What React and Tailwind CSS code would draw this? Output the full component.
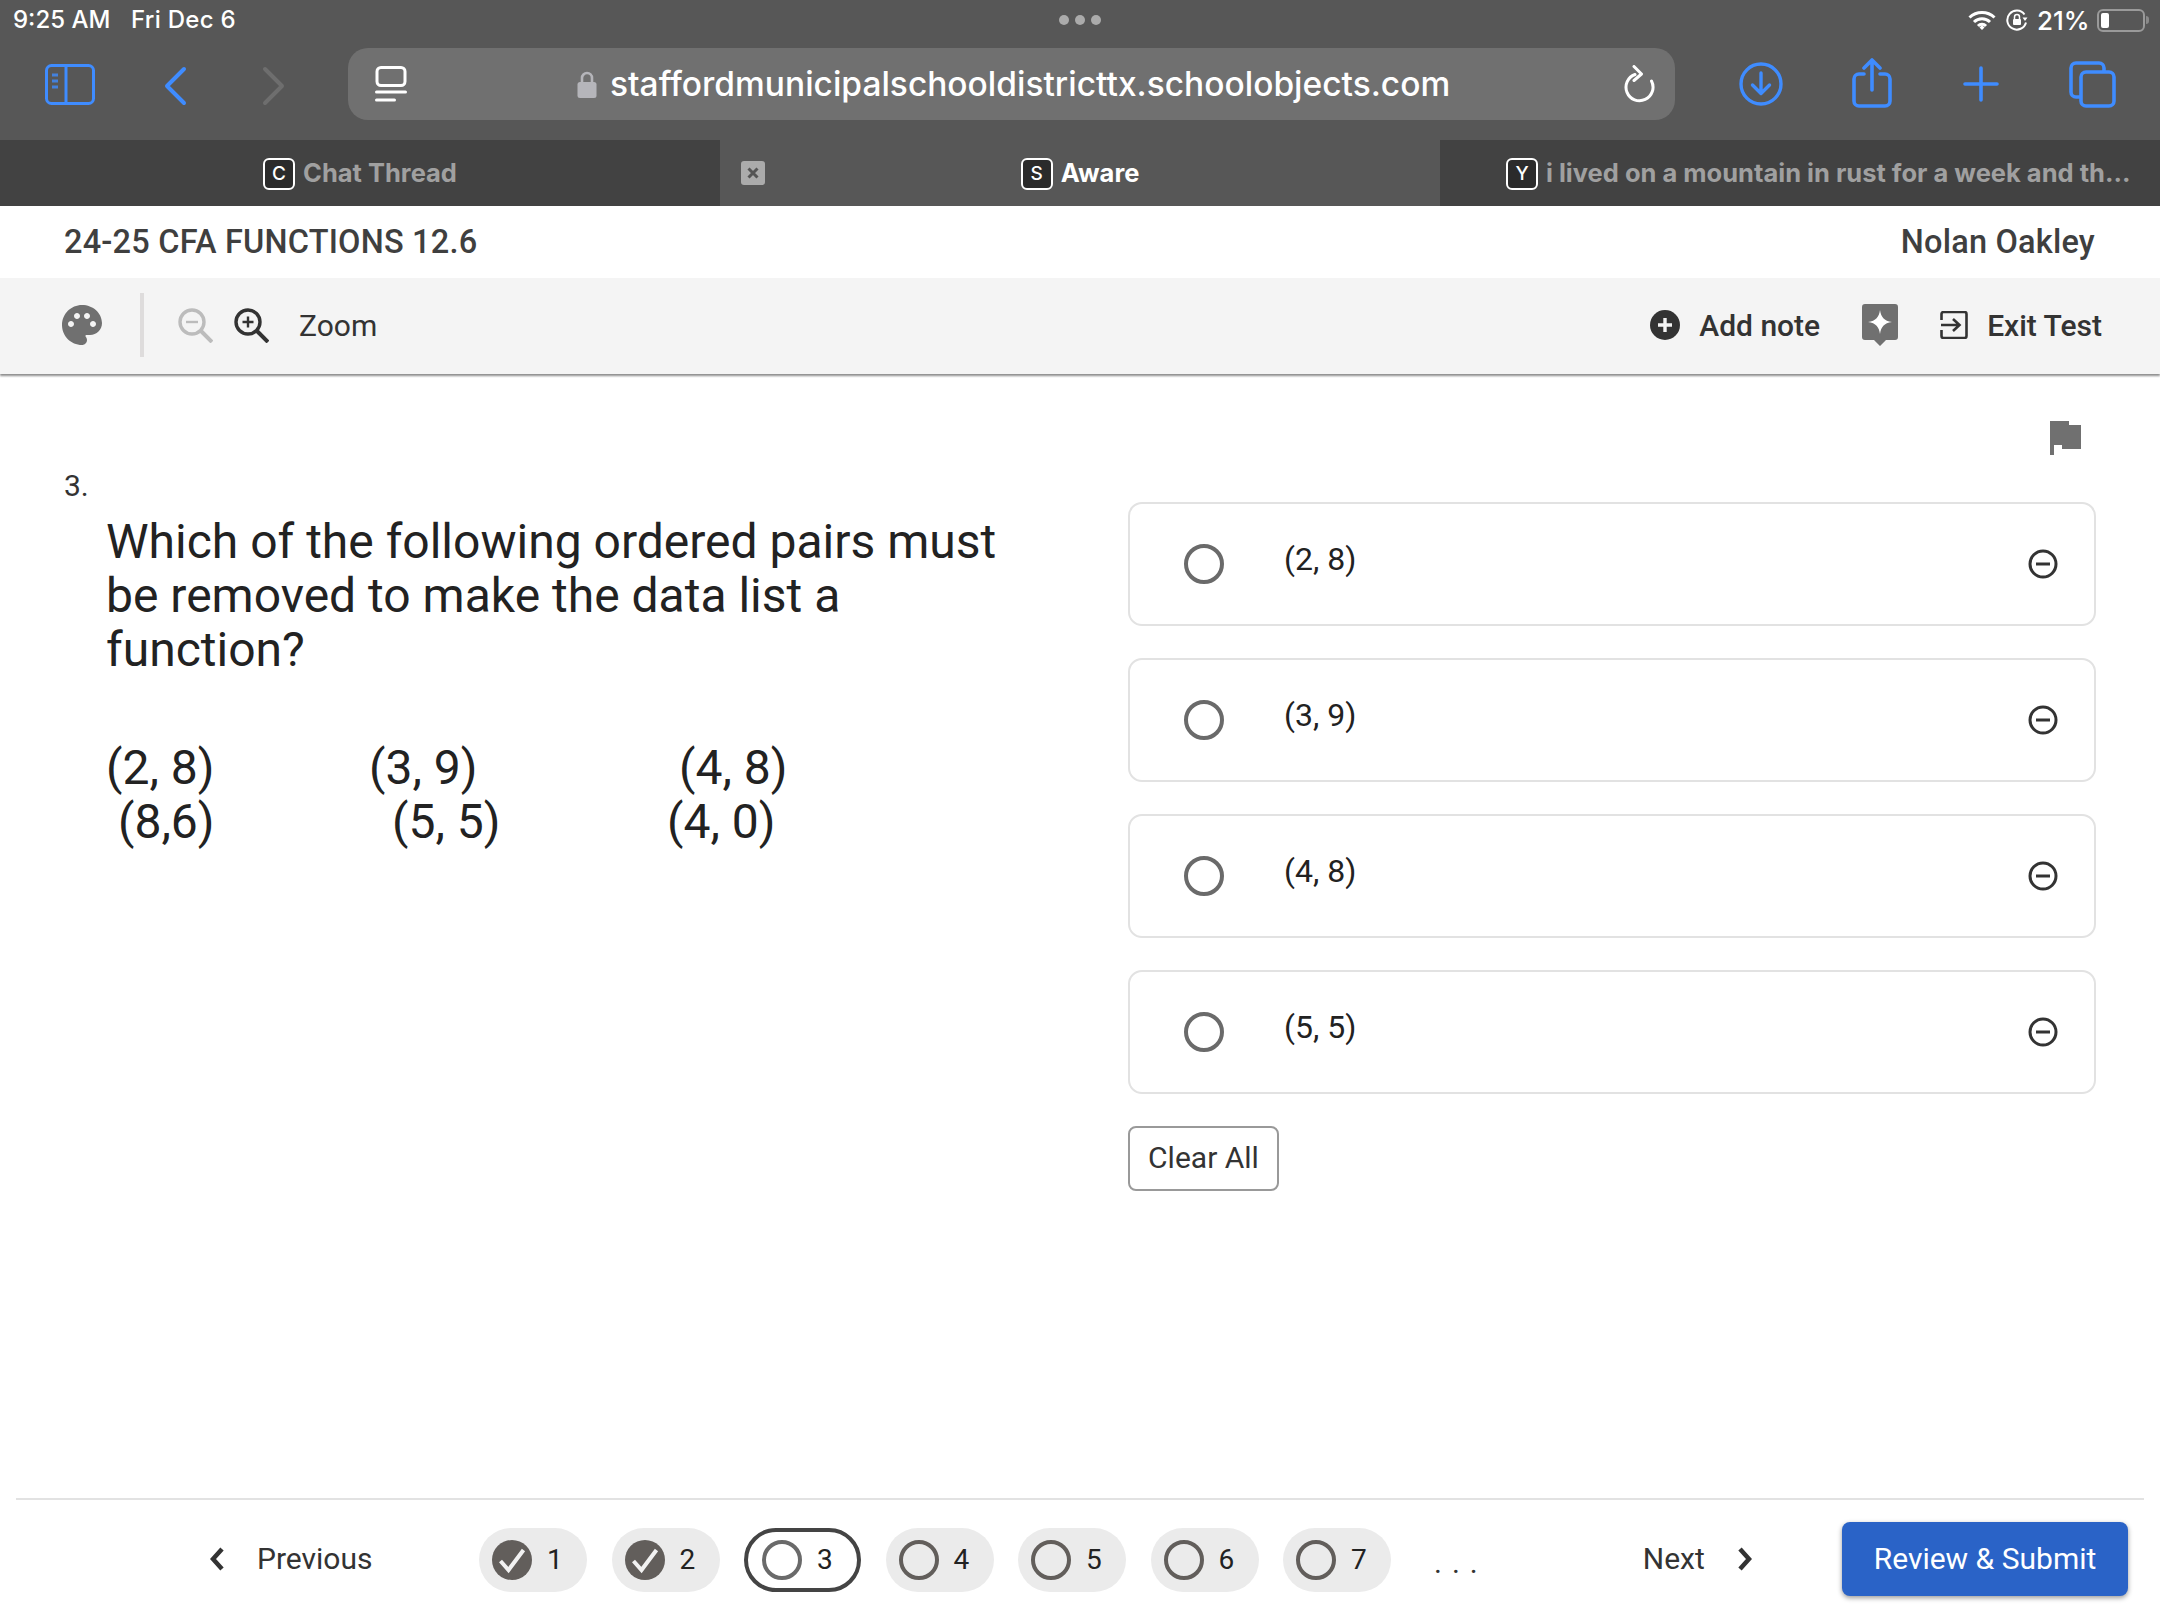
const options = ["(2, 8)", "(3, 9)", "(4, 8)", "(5, 5)"];

function SidebarIcon() {
  return (
    <svg width="50" height="41" viewBox="0 0 50 41" fill="none" stroke="#3f8cff">
      <rect x="1.5" y="1.5" width="47" height="38" rx="5" strokeWidth="3" />
      <path d="M21 2v37" strokeWidth="3" />
      <path d="M7 11h6M7 17h6M7 23h6" strokeWidth="3" opacity=".8" />
    </svg>
  );
}

function Chevron({ dir, color, width = 4 }) {
  return (
    <svg width="24" height="40" viewBox="0 0 24 40" fill="none" stroke={color} strokeWidth={width} strokeLinecap="round" strokeLinejoin="round">
      <path d={dir === "left" ? "M21 3L4 20l17 17" : "M3 3l17 17L3 37"} />
    </svg>
  );
}

function ReaderIcon() {
  return (
    <svg className="shrink-0" width="32" height="36" viewBox="0 0 32 36" fill="none" stroke="#fff" strokeWidth="3" strokeLinecap="round">
      <rect x="2" y="1.5" width="28" height="18" rx="4" />
      <path d="M1.5 26h29M1.5 34h18" />
    </svg>
  );
}

function LockIcon() {
  return (
    <svg className="shrink-0" width="20" height="27" viewBox="0 0 20 27">
      <path d="M5 12V7a5 5 0 0 1 10 0v5" fill="none" stroke="#b5b5ba" strokeWidth="2.6" />
      <rect x="0.5" y="11" width="19" height="16" rx="2.5" fill="#b5b5ba" />
    </svg>
  );
}

function ReloadIcon() {
  return (
    <svg className="shrink-0" width="32" height="38" viewBox="0 0 32 38" fill="none" stroke="#fff" strokeWidth="3" strokeLinecap="round" strokeLinejoin="round">
      <path d="M12 9.5A13.5 13.5 0 1 0 28.5 16" />
      <path d="M11 1.5l7.5 7.5-7.5 6.5" />
    </svg>
  );
}

function DownloadIcon() {
  return (
    <svg width="44" height="44" viewBox="0 0 44 44" fill="none" stroke="#3f8cff" strokeWidth="3.4" strokeLinecap="round" strokeLinejoin="round">
      <circle cx="22" cy="22" r="20" />
      <path d="M22 11v20M13.5 23l8.5 8.5 8.5-8.5" />
    </svg>
  );
}

function ShareIcon() {
  return (
    <svg width="40" height="50" viewBox="0 0 40 50" fill="none" stroke="#3f8cff" strokeWidth="3.6" strokeLinecap="round" strokeLinejoin="round">
      <path d="M12 16H7a5 5 0 0 0-5 5v22a5 5 0 0 0 5 5h26a5 5 0 0 0 5-5V21a5 5 0 0 0-5-5h-5" />
      <path d="M20 32V3M12 10l8-8 8 8" />
    </svg>
  );
}

function PlusIcon() {
  return (
    <svg width="36" height="36" viewBox="0 0 36 36" fill="none" stroke="#3f8cff" strokeWidth="3.6" strokeLinecap="round">
      <path d="M18 2v32M2 18h32" />
    </svg>
  );
}

function TabsIcon() {
  return (
    <svg width="47" height="47" viewBox="0 0 47 47" fill="none" stroke="#3f8cff" strokeWidth="3.6" strokeLinejoin="round">
      <path d="M11 36H7a5 5 0 0 1-5-5V7a5 5 0 0 1 5-5h23a5 5 0 0 1 5 5v4" />
      <rect x="12" y="11" width="33" height="34" rx="5" />
    </svg>
  );
}

function WifiIcon() {
  return (
    <svg width="28" height="20" viewBox="0 0 28 20" fill="none" stroke="#fff" strokeWidth="3">
      <path d="M1.5 7.5a18 18 0 0 1 25 0M6 12a11.5 11.5 0 0 1 16 0M10 16a5.5 5.5 0 0 1 8 0" />
      <path d="M11.5 17.5L14 15l2.5 2.5L14 20z" fill="#fff" stroke="none" />
    </svg>
  );
}

function RotationLock() {
  return (
    <svg width="22" height="22" viewBox="0 0 22 22" fill="none" stroke="#fff" strokeWidth="2">
      <path d="M20 13.5A9.5 9.5 0 1 1 18.5 5.5" />
      <path d="M16.5 8.5h5l-2.5 3.5z" fill="#fff" stroke="none" />
      <rect x="7" y="10" width="8" height="6" rx="1" fill="#fff" stroke="none" />
      <path d="M8.5 10V8a2.5 2.5 0 0 1 5 0v2" strokeWidth="1.5" />
    </svg>
  );
}

function FavBadge({ letter }) {
  return (
    <span className="flex h-[32px] w-[32px] shrink-0 items-center justify-center rounded-[6px] border-2 border-white bg-[#2b2b2b] font-['Inter',sans-serif] text-[19px] leading-none font-medium text-white">
      {letter}
    </span>
  );
}

function CheckCircle() {
  return (
    <svg width="40" height="40" viewBox="0 0 40 40" className="shrink-0">
      <circle cx="20" cy="20" r="20" fill="#625e5b" />
      <path d="M8.5 21l8 9 15-20" fill="none" stroke="#f2f2f2" strokeWidth="4" />
    </svg>
  );
}

function Pill({ n, done, active }) {
  if (active) {
    return (
      <div className="flex h-[64px] w-[117px] items-center rounded-[32px] border-[4px] border-[#444] bg-white pl-[14px]">
        <span className="h-[40px] w-[40px] shrink-0 rounded-full border-[4px] border-[#6a6a6a]" />
        <span className="ml-[15px] text-[28px] leading-none text-[#222]">{n}</span>
      </div>
    );
  }
  return (
    <div className="flex h-[64px] w-[108px] items-center rounded-[32px] bg-[#ebebeb] pl-[13px]">
      {done ? (
        <CheckCircle />
      ) : (
        <span className="h-[40px] w-[40px] shrink-0 rounded-full border-[4px] border-[#625e5b]" />
      )}
      <span className="ml-[15px] text-[28px] leading-none text-[#222]">{n}</span>
    </div>
  );
}

export default function App() {
  return (
    <div className="flex h-[1620px] w-[2160px] flex-col overflow-hidden bg-white font-['Roboto',sans-serif]">
      {/* safari chrome */}
      <div className="h-[140px] shrink-0 bg-[#575757]">
        <div className="flex h-[40px] items-center pl-[13px] font-['Inter',sans-serif] text-[24px] font-medium text-white">
          <span className="w-[118px]">9:25 AM</span>
          <span className="tracking-[0.3px]">Fri Dec 6</span>
          <div className="ml-[823px] flex gap-[6px]">
            <span className="h-[10px] w-[10px] rounded-full bg-[#ababab]" />
            <span className="h-[10px] w-[10px] rounded-full bg-[#ababab]" />
            <span className="h-[10px] w-[10px] rounded-full bg-[#ababab]" />
          </div>
          <div className="ml-[867px]"><WifiIcon /></div>
          <div className="ml-[10px]"><RotationLock /></div>
          <span className="ml-[9px] w-[50px] text-[26px] whitespace-nowrap">21%</span>
          <div className="ml-[10px] flex items-center">
            <div className="flex h-[23px] w-[48px] items-center rounded-[6px] border-2 border-[#9a9a9a] pl-[2px]">
              <span className="h-[15px] w-[8px] rounded-[2px] bg-white" />
            </div>
            <span className="ml-[1px] h-[8px] w-[3px] rounded-r-full bg-[#8a8a8a]" />
          </div>
        </div>
        <div className="flex h-[100px] items-start pt-[8px]">
          <div className="mt-[16px] ml-[45px]"><SidebarIcon /></div>
          <div className="mt-[18px] ml-[68px]"><Chevron dir="left" color="#3f8cff" /></div>
          <div className="mt-[18px] ml-[75px]"><Chevron dir="right" color="#6e6e6e" /></div>
          <div className="ml-[62px] flex h-[72px] w-[1327px] items-center rounded-[20px] bg-[#707070] pr-[20px] pl-[27px]">
            <ReaderIcon />
            <div className="ml-[170px]"><LockIcon /></div>
            <span className="mt-[2px] ml-[13px] font-['Inter',sans-serif] text-[33.5px] leading-none font-medium whitespace-nowrap text-white">
              staffordmunicipalschooldistricttx.schoolobjects.com
            </span>
            <div className="ml-auto"><ReloadIcon /></div>
          </div>
          <div className="mt-[14px] ml-[64px]"><DownloadIcon /></div>
          <div className="mt-[10px] ml-[69px]"><ShareIcon /></div>
          <div className="mt-[18px] ml-[71px]"><PlusIcon /></div>
          <div className="mt-[13px] ml-[70px]"><TabsIcon /></div>
        </div>
      </div>
      <div className="flex h-[66px] shrink-0 font-['Inter',sans-serif] text-[25.5px] font-bold">
        <div className="flex w-[720px] items-center justify-center gap-[8px] bg-[#424242] pt-[1px] text-[#a0a0a0]">
          <FavBadge letter="C" />
          <span>Chat Thread</span>
        </div>
        <div className="relative flex w-[720px] items-center justify-center gap-[8px] bg-[#575757] pt-[1px] text-white">
          <span className="absolute top-[21px] left-[21px] flex h-[24px] w-[24px] items-center justify-center rounded-[3px] bg-[#ababab]">
            <svg width="12" height="12" viewBox="0 0 12 12" stroke="#555" strokeWidth="3">
              <path d="M1.5 1.5l9 9M10.5 1.5l-9 9" />
            </svg>
          </span>
          <FavBadge letter="S" />
          <span>Aware</span>
        </div>
        <div className="flex w-[720px] items-center gap-[8px] bg-[#424242] pt-[1px] pl-[66px] text-[#a0a0a0]">
          <FavBadge letter="Y" />
          <span className="whitespace-nowrap">i lived on a mountain in rust for a week and th...</span>
        </div>
      </div>

      {/* test header */}
      <div className="flex h-[72px] shrink-0 items-center justify-between pr-[65px] pl-[64px] text-[32.5px] font-medium tracking-[0.2px] text-[#3f3f3f]">
        <span>24-25 CFA FUNCTIONS 12.6</span>
        <span>Nolan Oakley</span>
      </div>
      <div className="flex h-[96px] shrink-0 items-center bg-[#f4f4f4] pr-[58px] pb-[2px] pl-[62px] text-[30px] text-[#333] shadow-[0_2px_2px_rgba(0,0,0,0.45)]">
        <svg width="40" height="40" viewBox="2 2 20 20" fill="#707070">
          <path d="M12 2C6.49 2 2 6.49 2 12s4.49 10 10 10c1.38 0 2.5-1.12 2.5-2.5 0-.61-.23-1.2-.64-1.67-.08-.1-.13-.21-.13-.33 0-.28.22-.5.5-.5H16c3.31 0 6-2.69 6-6 0-4.96-4.49-9-10-9zm-5.5 11c-.83 0-1.5-.67-1.5-1.5S5.67 10 6.5 10 8 10.67 8 11.5 7.33 13 6.5 13zm3-4C8.67 9 8 8.33 8 7.5S8.67 6 9.5 6s1.5.67 1.5 1.5S10.33 9 9.5 9zm5 0c-.83 0-1.5-.67-1.5-1.5S13.67 6 14.5 6s1.5.67 1.5 1.5S15.33 9 14.5 9zm3 4c-.83 0-1.5-.67-1.5-1.5s.67-1.5 1.5-1.5 1.5.67 1.5 1.5-.67 1.5-1.5 1.5z" />
        </svg>
        <span className="ml-[38px] h-[64px] w-[4px] bg-[#dedcdc]" />
        <svg className="ml-[34px]" width="35" height="35" viewBox="0 0 35 35" fill="none" stroke="#bcbcbc" strokeWidth="3.4">
          <circle cx="14" cy="14" r="12" />
          <path d="M8 14h12" strokeWidth="2.4" />
          <path d="M23 23l11 11" strokeWidth="4" />
        </svg>
        <svg className="ml-[21px]" width="35" height="35" viewBox="0 0 35 35" fill="none" stroke="#333" strokeWidth="3.4">
          <circle cx="14" cy="14" r="12" />
          <path d="M8.5 14h11M14 8.5v11" strokeWidth="2.4" />
          <path d="M23 23l11 11" strokeWidth="4" />
        </svg>
        <span className="ml-[30px]">Zoom</span>
        <svg className="ml-auto" width="30" height="30" viewBox="0 0 30 30">
          <circle cx="15" cy="15" r="15" fill="#333" />
          <path d="M15 8v14M8 15h14" stroke="#f4f4f4" strokeWidth="3.4" />
        </svg>
        <span className="ml-[19px] font-medium">Add note</span>
        <svg className="ml-[42px]" width="36" height="42" viewBox="0 0 36 42">
          <path d="M3 0h30a3 3 0 0 1 3 3v30a3 3 0 0 1-3 3h-9l-6 6-6-6H3a3 3 0 0 1-3-3V3a3 3 0 0 1 3-3z" fill="#707070" />
          <path d="M18 6c1 7 4 11 12 12-8 1-11 5-12 12-1-7-4-11-12-12 8-1 11-5 12-12z" fill="#fff" />
        </svg>
        <svg className="ml-[42px]" width="28" height="28" viewBox="0 0 28 28" fill="none" stroke="#333" strokeWidth="2.6">
          <path d="M1.5 9V3a2 2 0 0 1 2-2h21a2 2 0 0 1 2 2v22a2 2 0 0 1-2 2h-21a2 2 0 0 1-2-2v-6" />
          <path d="M1 14h18M13 8l6.5 6-6.5 6" />
        </svg>
        <span className="ml-[19px] font-medium">Exit Test</span>
      </div>

      {/* question */}
      <div className="flex min-h-0 flex-1 pr-[64px] pl-[64px]">
        <div className="w-[1064px] pt-[92px]">
          <div className="text-[30px] leading-[40px] text-[#333]">3.</div>
          <div className="mt-[9px] pl-[42px] text-[48px] leading-[54px] text-[#222]">
            <p className="w-[900px]">Which of the following ordered pairs must be removed to make the data list a function?</p>
            <div className="mt-[64px] flex">
              <span className="w-[263px]">(2, 8)</span>
              <span className="w-[310px]">(3, 9)</span>
              <span>(4, 8)</span>
            </div>
            <div className="flex">
              <span className="ml-[12px] w-[274px]">(8,6)</span>
              <span className="w-[275px]">(5, 5)</span>
              <span>(4, 0)</span>
            </div>
          </div>
        </div>
        <div className="flex w-[968px] flex-col">
          <div className="flex h-[128px] shrink-0 justify-end pt-[47px] pr-[15px]">
            <svg width="31" height="34" viewBox="0 0 31 34" fill="#707070">
              <path d="M0 0h19v4h12v24H12v-4H4v10H0z" />
            </svg>
          </div>
          <div className="flex flex-col gap-[32px]">
            {options.map((o) => (
              <div key={o} className="flex h-[124px] items-center rounded-[14px] border-2 border-[#e2e2e2] pr-[36px] pl-[54px]">
                <span className="h-[40px] w-[40px] shrink-0 rounded-full border-[4px] border-[#6a6a6a]" />
                <span className="mb-[11px] ml-[60px] text-[32px] text-[#222]">{o}</span>
                <svg className="ml-auto" width="30" height="30" viewBox="0 0 30 30" fill="none" stroke="#333" strokeWidth="3">
                  <circle cx="15" cy="15" r="13" />
                  <path d="M8 15h14" />
                </svg>
              </div>
            ))}
          </div>
          <button className="mt-[32px] h-[65px] w-[151px] rounded-[8px] border-2 border-[#999] bg-white pb-[2px] text-[30px] text-[#333]">
            Clear All
          </button>
        </div>
      </div>

      {/* bottom nav */}
      <div className="mx-[16px] flex h-[122px] shrink-0 items-center border-t-2 border-[#e2e2e2] pr-[16px] pb-[3px] text-[30px] text-[#333]">
        <svg className="ml-[194px]" width="14" height="24" viewBox="0 0 14 24" fill="none" stroke="#333" strokeWidth="4.5">
          <path d="M12 2L3 12l9 10" />
        </svg>
        <span className="ml-[33px] w-[222px]">Previous</span>
        <div className="mt-[2px] flex items-center gap-[24.5px]">
          <Pill n={1} done />
          <Pill n={2} done />
          <Pill n={3} active />
          <Pill n={4} />
          <Pill n={5} />
          <Pill n={6} />
          <Pill n={7} />
        </div>
        <span className="mt-[8px] ml-[43px] text-[30px] tracking-[10px] text-[#333]">...</span>
        <span className="ml-[155px]">Next</span>
        <svg className="ml-[33px]" width="14" height="24" viewBox="0 0 14 24" fill="none" stroke="#333" strokeWidth="4.5">
          <path d="M2 2l9 10-9 10" />
        </svg>
        <button className="ml-auto h-[74px] w-[286px] rounded-[8px] bg-[#2a63c7] text-[30px] text-white shadow-[0_2px_5px_rgba(0,0,0,0.4)]">
          Review &amp; Submit
        </button>
      </div>
    </div>
  );
}
